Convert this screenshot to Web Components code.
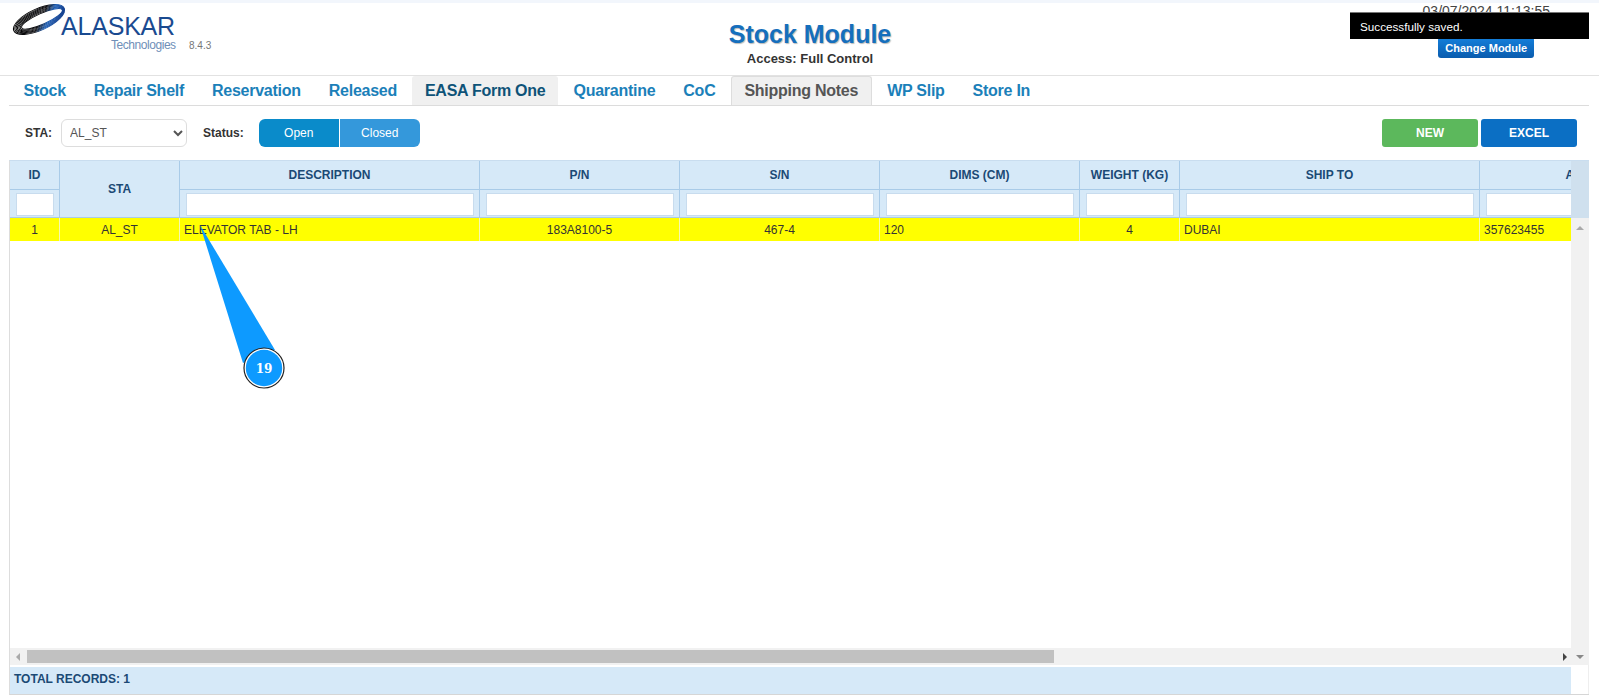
<!DOCTYPE html>
<html>
<head>
<meta charset="utf-8">
<title>Stock Module</title>
<style>
  html, body { margin: 0; padding: 0; height: 100%; background: #fff; overflow: hidden; }
  body { font-family: "Liberation Sans", Arial, sans-serif; }
</style>
</head>
<body>
<stock-page>
  <app-header title-text="Stock Module" access="Access: Full Control" stamp="03/07/2024 11:13:55"></app-header>
  <module-tabs>
    <module-tab>Stock</module-tab>
    <module-tab>Repair Shelf</module-tab>
    <module-tab>Reservation</module-tab>
    <module-tab>Released</module-tab>
    <module-tab state="hover">EASA Form One</module-tab>
    <module-tab>Quarantine</module-tab>
    <module-tab>CoC</module-tab>
    <module-tab state="active">Shipping Notes</module-tab>
    <module-tab>WP Slip</module-tab>
    <module-tab>Store In</module-tab>
  </module-tabs>
  <stock-toolbar></stock-toolbar>
  <shipping-grid></shipping-grid>
  <toast-note>Successfully saved.</toast-note>
  <step-marker step="19"></step-marker>
</stock-page>

<script>
class StockPage extends HTMLElement {
  constructor() {
    super();
    const shadowRoot = this.attachShadow({mode: 'open'});
    shadowRoot.innerHTML = `
      <style>
        :host {
          display: flex;
          flex-direction: column;
          position: relative;
          height: 696px;
          color: #333;
          font-family: "Liberation Sans", Arial, sans-serif;
        }
      </style>
      <slot></slot>
    `;
  }
}

class AppHeader extends HTMLElement {
  constructor() {
    super();
    const shadowRoot = this.attachShadow({mode: 'open'});
    shadowRoot.innerHTML = `
      <style>
        :host {
          display: grid;
          grid-template-columns: 420px 780px 1fr;
          box-sizing: border-box;
          height: 76px;
          border-top: 3px solid #f2f6fc;
          border-bottom: 1px solid #e2e2e2;
        }

        #brand {
          display: flex;
          align-items: flex-start;
          padding: 1px 0 0 12px;
        }

        #brand svg {
          flex: none;
          display: block;
          overflow: visible;
        }

        #version {
          font-size: 10px;
          color: #777;
          margin: 36px 0 0 12px;
        }

        #middle {
          display: flex;
          flex-direction: column;
          align-items: center;
          padding-top: 15px;
        }

        h1 {
          margin: 0;
          font-size: 25px;
          line-height: 32px;
          font-weight: bold;
          color: #156fbd;
          text-shadow: 1px 1px 1px #bbb;
        }

        #access {
          font-size: 13px;
          line-height: 15px;
          font-weight: bold;
          color: #333;
          margin-top: 1px;
        }

        #side {
          display: flex;
          flex-direction: column;
          align-items: center;
          justify-content: flex-start;
          justify-self: end;
          padding-right: 49px;
        }

        #stamp {
          font-size: 14px;
          line-height: 16px;
          color: #444;
          margin-bottom: 18px;
        }

        button {
          box-sizing: border-box;
          width: 96px;
          height: 21px;
          padding: 0;
          border: 0;
          border-radius: 3px;
          background: linear-gradient(#1480dc, #0a5cae);
          color: #fff;
          font: bold 11px "Liberation Sans", Arial, sans-serif;
        }
      </style>
      <div id="brand">
        <svg width="165" height="50" viewBox="0 0 165 50">
          <defs>
            <linearGradient id="ring" gradientUnits="userSpaceOnUse" x1="14" y1="2" x2="38" y2="30">
              <stop offset="0" stop-color="#000"/>
              <stop offset=".55" stop-color="#0c0c10"/>
              <stop offset=".75" stop-color="#1c5db4"/>
              <stop offset="1" stop-color="#123f8f"/>
            </linearGradient>
          </defs>
          <g fill="none" stroke="url(#ring)" stroke-width=".95" transform="rotate(-24 27 15.5)">
            <ellipse cx="27" cy="15.5" rx="27.6" ry="10.8"/>
            <ellipse cx="27.5" cy="15.6" rx="26.7" ry="9.9"/>
            <ellipse cx="28" cy="15.7" rx="25.8" ry="9"/>
            <ellipse cx="28.5" cy="15.8" rx="24.9" ry="8.1"/>
            <ellipse cx="29" cy="15.9" rx="24" ry="7.2"/>
            <ellipse cx="29.5" cy="16" rx="23.1" ry="6.3"/>
            <ellipse cx="30" cy="16.1" rx="22.2" ry="5.4"/>
          </g>
          <text x="49" y="31" font-family="Liberation Sans, Arial, sans-serif" font-size="25" letter-spacing="-.2" fill="#1a4a90">ALASKAR</text>
          <text x="99" y="45" font-family="Liberation Sans, Arial, sans-serif" font-size="12" letter-spacing="-.45" fill="#6f8fb8">Technologies</text>
        </svg>
        <span id="version">8.4.3</span>
      </div>
      <div id="middle">
        <h1></h1>
        <div id="access"></div>
      </div>
      <div id="side">
        <div id="stamp"></div>
        <button>Change Module</button>
      </div>
    `;
    shadowRoot.querySelector('h1').textContent = this.getAttribute('title-text');
    shadowRoot.querySelector('#access').textContent = this.getAttribute('access');
    shadowRoot.querySelector('#stamp').textContent = this.getAttribute('stamp');
  }
}

class ModuleTabs extends HTMLElement {
  constructor() {
    super();
    const shadowRoot = this.attachShadow({mode: 'open'});
    shadowRoot.innerHTML = `
      <style>
        :host {
          display: flex;
          gap: 3px;
          box-sizing: border-box;
          height: 30px;
          margin: 0 10px 0 9px;
          padding-left: 2px;
          border-bottom: 1px solid #dcdcdc;
        }
      </style>
      <slot></slot>
    `;
  }
}

class ModuleTab extends HTMLElement {
  constructor() {
    super();
    const shadowRoot = this.attachShadow({mode: 'open'});
    shadowRoot.innerHTML = `
      <style>
        :host {
          display: block;
          box-sizing: border-box;
          height: 29px;
          padding: 0 12.5px;
          font-size: 16px;
          letter-spacing: -.26px;
          line-height: 29px;
          font-weight: bold;
          color: #1b80b9;
          white-space: nowrap;
        }

        :host([state="hover"]) {
          background: #f0f0f0;
          color: #0e5378;
          border-radius: 3px 3px 0 0;
        }

        :host([state="active"]) {
          background: #f0f0f0;
          color: #555;
          border: 1px solid #ddd;
          border-bottom: 0;
          border-radius: 3px 3px 0 0;
          line-height: 27px;
        }
      </style>
      <slot></slot>
    `;
  }
}

class StockToolbar extends HTMLElement {
  constructor() {
    super();
    const shadowRoot = this.attachShadow({mode: 'open'});
    shadowRoot.innerHTML = `
      <style>
        :host {
          display: flex;
          align-items: center;
          box-sizing: border-box;
          height: 54px;
          padding: 13px 22px 13px 25px;
        }

        label {
          font-size: 12px;
          font-weight: bold;
          color: #333;
        }

        select {
          box-sizing: border-box;
          width: 126px;
          height: 28px;
          margin: 0 16px 0 9px;
          padding-left: 4px;
          border: 1px solid #ddd;
          border-radius: 6px;
          background: #fff;
          color: #555;
          font: 12px "Liberation Sans", Arial, sans-serif;
        }

        .group {
          display: flex;
          gap: 1px;
          margin-left: 15px;
        }

        button {
          box-sizing: border-box;
          height: 28px;
          padding: 0;
          border: 0;
          color: #fff;
          font: 12px "Liberation Sans", Arial, sans-serif;
        }

        #open {
          width: 80px;
          background: #0a8bca;
          border-radius: 6px 0 0 6px;
        }

        #closed {
          width: 80px;
          background: #3498db;
          border-radius: 0 6px 6px 0;
        }

        #actions {
          display: flex;
          gap: 3px;
          margin-left: auto;
        }

        #actions button {
          width: 96px;
          font-weight: bold;
          border-radius: 3px;
        }

        #new { background: #5cb85c; }
        #excel { background: #0b6fc4; }
      </style>
      <label>STA:</label>
      <select><option>AL_ST</option></select>
      <label>Status:</label>
      <div class="group">
        <button id="open">Open</button>
        <button id="closed">Closed</button>
      </div>
      <div id="actions">
        <button id="new">NEW</button>
        <button id="excel">EXCEL</button>
      </div>
    `;
  }
}

class ShippingGrid extends HTMLElement {
  constructor() {
    super();
    const shadowRoot = this.attachShadow({mode: 'open'});
    const filter = '<input type="text">';
    shadowRoot.innerHTML = `
      <style>
        :host {
          display: grid;
          grid-template-columns: 1fr 18px;
          grid-template-rows: 57px 1fr 17px 29px;
          box-sizing: border-box;
          height: 535px;
          margin: 0 10px 1px 9px;
          border-left: 1px solid #ddd;
          border-top: 1px solid #c9ddef;
          border-bottom: 1px solid #d6d6d6;
        }

        #view {
          grid-column: 1;
          grid-row: 1 / 3;
          overflow: hidden;
        }

        table {
          table-layout: fixed;
          width: 1670px;
          border-collapse: separate;
          border-spacing: 0;
          font-size: 12px;
        }

        th {
          box-sizing: border-box;
          background: #d6e9f8;
          color: #1b4a75;
          font-weight: bold;
          text-align: center;
          border-right: 1px solid #a9cbe8;
          padding: 0;
          white-space: nowrap;
        }

        tr.titles th {
          height: 29px;
          border-bottom: 1px solid #a9cbe8;
        }

        th[rowspan] {
          height: 57px;
          border-bottom: 1px solid #a9cbe8;
        }

        tr.filters th {
          height: 28px;
          border-bottom: 1px solid #a9cbe8;
          padding: 3px 5px 0 6px;
          vertical-align: top;
        }

        input {
          display: block;
          box-sizing: border-box;
          width: 100%;
          height: 23px;
          margin: 0;
          padding: 0;
          background: #fff;
          border: 1px solid #c8dcee;
        }

        td {
          box-sizing: border-box;
          height: 23px;
          padding: 0 4px;
          background: #ff0;
          color: #333;
          border-right: 1px solid #f7f7b0;
          white-space: nowrap;
          overflow: hidden;
        }

        td.mid { text-align: center; }

        #rail-top {
          grid-column: 2;
          grid-row: 1;
          background: #cfe0ee;
        }

        #rail {
          grid-column: 2;
          grid-row: 2 / 4;
          display: flex;
          flex-direction: column;
          justify-content: space-between;
          align-items: center;
          padding: 8px 0 6px;
          background: #f1f1f1;
        }

        #hbar {
          grid-column: 1;
          grid-row: 3;
          display: flex;
          align-items: center;
          box-sizing: border-box;
          padding: 0 0 0 17px;
          background: #f1f1f1;
          position: relative;
        }

        #thumb {
          width: 1027px;
          height: 13px;
          background: #c1c1c1;
        }

        .arrow {
          width: 0;
          height: 0;
          border-style: solid;
        }

        #left {
          position: absolute;
          left: 6px;
          border-width: 4px 4px 4px 0;
          border-color: transparent #aaa transparent transparent;
        }

        #right {
          position: absolute;
          right: 4px;
          border-width: 4px 0 4px 4px;
          border-color: transparent transparent transparent #444;
        }

        #up {
          border-width: 0 4px 4px;
          border-color: transparent transparent #aaa;
        }

        #down {
          border-width: 4px 4px 0;
          border-color: #888 transparent transparent;
        }

        #total {
          grid-column: 1;
          grid-row: 4;
          margin-top: 2px;
          padding-left: 4px;
          background: #d6e9f8;
          color: #1b4a75;
          font-size: 12px;
          font-weight: bold;
          line-height: 25px;
        }

        #corner {
          grid-column: 2;
          grid-row: 4;
          border-right: 1px solid #eee;
        }
      </style>
      <div id="view">
        <table>
          <colgroup>
            <col style="width:50px"><col style="width:120px"><col style="width:300px"><col style="width:200px">
            <col style="width:200px"><col style="width:200px"><col style="width:100px"><col style="width:300px"><col style="width:200px">
          </colgroup>
          <thead>
            <tr class="titles">
              <th>ID</th><th rowspan="2">STA</th><th>DESCRIPTION</th><th>P/N</th><th>S/N</th>
              <th>DIMS (CM)</th><th>WEIGHT (KG)</th><th>SHIP TO</th><th>AWB</th>
            </tr>
            <tr class="filters">
              <th>${filter}</th><th>${filter}</th><th>${filter}</th><th>${filter}</th>
              <th>${filter}</th><th>${filter}</th><th>${filter}</th><th>${filter}</th>
            </tr>
          </thead>
          <tbody>
            <tr>
              <td class="mid">1</td><td class="mid">AL_ST</td><td>ELEVATOR TAB - LH</td><td class="mid">183A8100-5</td>
              <td class="mid">467-4</td><td>120</td><td class="mid">4</td><td>DUBAI</td><td>357623455</td>
            </tr>
          </tbody>
        </table>
      </div>
      <div id="rail-top"></div>
      <div id="rail"><span class="arrow" id="up"></span><span class="arrow" id="down"></span></div>
      <div id="hbar"><span class="arrow" id="left"></span><div id="thumb"></div><span class="arrow" id="right"></span></div>
      <div id="total">TOTAL RECORDS: 1</div>
      <div id="corner"></div>
    `;
  }
}

class ToastNote extends HTMLElement {
  constructor() {
    super();
    const shadowRoot = this.attachShadow({mode: 'open'});
    shadowRoot.innerHTML = `
      <style>
        :host {
          position: absolute;
          left: 1350px;
          top: 12px;
          box-sizing: border-box;
          width: 239px;
          height: 27px;
          padding-left: 10px;
          background: #000;
          color: #fff;
          font-size: 11.7px;
          line-height: 27px;
          border-top: 1px solid #777;
        }
      </style>
      <slot></slot>
    `;
  }
}

class StepMarker extends HTMLElement {
  constructor() {
    super();
    const shadowRoot = this.attachShadow({mode: 'open'});
    shadowRoot.innerHTML = `
      <style>
        :host {
          position: absolute;
          left: 190px;
          top: 220px;
          width: 100px;
          height: 175px;
          pointer-events: none;
        }

        svg { display: block; }
      </style>
      <svg width="100" height="175" viewBox="190 220 100 175">
        <polygon points="200,225 243,363 275,350" fill="#0d9aff"/>
        <circle cx="264" cy="368" r="20" fill="#fff" stroke="#222" stroke-width="1.2"/>
        <circle cx="264" cy="368" r="18.2" fill="#0d9aff"/>
        <text id="num" x="264" y="373" text-anchor="middle" fill="#fff" font-family="DejaVu Serif, Liberation Serif, serif" font-size="12" font-weight="bold"></text>
      </svg>
    `;
    shadowRoot.querySelector('#num').textContent = this.getAttribute('step');
  }
}

customElements.define('stock-page', StockPage);
customElements.define('app-header', AppHeader);
customElements.define('module-tabs', ModuleTabs);
customElements.define('module-tab', ModuleTab);
customElements.define('stock-toolbar', StockToolbar);
customElements.define('shipping-grid', ShippingGrid);
customElements.define('toast-note', ToastNote);
customElements.define('step-marker', StepMarker);
</script>
</body>
</html>
